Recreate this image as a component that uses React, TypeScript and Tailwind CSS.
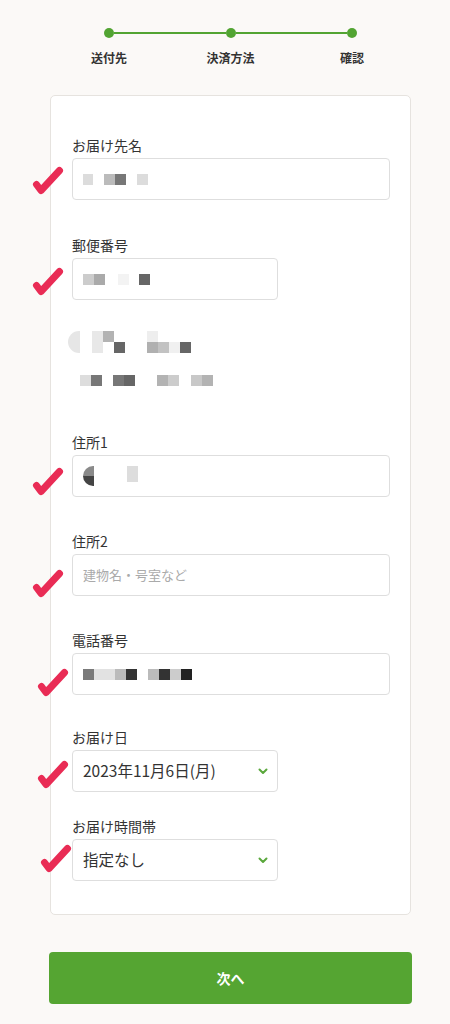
import type { ReactNode } from 'react';

const font = { fontFamily: '"Noto Sans CJK JP", "Noto Sans", sans-serif' };

type Cell = [number, string];

// Blurred/pixelated personal info, drawn as flat grey cells
function Mosaic({ cells, h = 11 }: { cells: Cell[]; h?: number }) {
  return (
    <div className="flex">
      {cells.map(([w, c], i) => (
        <div key={i} style={{ width: w, height: h, background: c }} />
      ))}
    </div>
  );
}

function Check({ className }: { className: string }) {
  return (
    <svg className={`absolute w-[32px] h-[30px] ${className}`} viewBox="0 0 32 30">
      <path d="M4.5 19.5L9 25.5L27.5 5.5" fill="none" stroke="#e92c55" strokeWidth="7" strokeLinecap="round" strokeLinejoin="round" />
    </svg>
  );
}

function Chevron() {
  return (
    <svg className="w-[10px] h-[7px]" viewBox="0 0 10 7">
      <polyline points="1.5,1.5 5,5 8.5,1.5" fill="none" stroke="#5aa83c" strokeWidth="2" strokeLinecap="round" strokeLinejoin="round" />
    </svg>
  );
}

function Field({
  label,
  narrow,
  check,
  className = '',
  children,
}: {
  label: string;
  narrow?: boolean;
  check: string;
  className?: string;
  children: ReactNode;
}) {
  return (
    <div className={className}>
      <div className="text-[14px] leading-[20px] text-[#333] mb-[3px]">{label}</div>
      <div
        className={`relative h-[42px] border border-[#dedede] rounded-[4px] bg-white flex items-center pl-[10px] pr-[9px] ${
          narrow ? 'w-[206px]' : 'w-[318px]'
        }`}
      >
        {children}
        <Check className={check} />
      </div>
    </div>
  );
}

export default function App() {
  return (
    <div className="w-[450px] min-h-[1024px] bg-[#fbf9f7] pt-[28px] pb-[20px]" style={font}>
      {/* stepper */}
      <div className="ml-[104px] w-[253px] flex items-center">
        <div className="w-[10px] h-[10px] rounded-full bg-[#52a432]" />
        <div className="flex-1 h-[2px] bg-[#52a432]" />
        <div className="w-[10px] h-[10px] rounded-full bg-[#52a432]" />
        <div className="flex-1 h-[2px] bg-[#52a432]" />
        <div className="w-[10px] h-[10px] rounded-full bg-[#52a432]" />
      </div>
      <div className="ml-[79px] w-[303px] mt-[11px] flex justify-between text-[12px] leading-[18px] font-bold text-[#333]">
        <div className="w-[60px] text-center">送付先</div>
        <div className="w-[60px] text-center">決済方法</div>
        <div className="w-[60px] text-center">確認</div>
      </div>

      {/* form card */}
      <div className="ml-[50px] w-[361px] mt-[28px] bg-white border border-[#e6e3df] rounded-[5px] pt-[39px] pb-[33px] pl-[21px] pr-[20px]">
        <Field label="お届け先名" check="left-[-41px] top-[6px]">
          <Mosaic cells={[[10, '#dcdcdc'], [11, 'transparent'], [11, '#bbb'], [11, '#777'], [11, 'transparent'], [11, '#dcdcdc']]} />
        </Field>

        <Field label="郵便番号" narrow className="mt-[35px]" check="left-[-41px] top-[7px]">
          <Mosaic cells={[[11, '#ccc'], [11, '#aaa'], [13, 'transparent'], [11, '#f3f3f3'], [10, 'transparent'], [11, '#666']]} />
        </Field>

        <div className="mt-[31px] flex flex-col">
          <div className="flex">
            <div className="w-[12px] h-[22px] rounded-l-full bg-[#e6e6e6] ml-[-4px]" />
            <div className="w-[12px]" />
            <div>
              <Mosaic cells={[[11, '#e8e8e8'], [11, '#b3b3b3']]} />
              <Mosaic cells={[[11, '#e8e8e8'], [11, 'transparent'], [11, '#666']]} />
            </div>
            <div className="w-[22px]" />
            <div>
              <Mosaic cells={[[11, '#eee']]} />
              <Mosaic cells={[[11, '#b0b0b0'], [11, '#c2c2c2'], [11, '#f0f0f0'], [11, '#666']]} />
            </div>
          </div>
          <div className="mt-[22px] ml-[8px]">
            <Mosaic cells={[[11, '#ddd'], [11, '#777'], [11, 'transparent'], [11, '#777'], [11, '#666'], [22, 'transparent'], [11, '#b3b3b3'], [11, '#ccc'], [12, 'transparent'], [11, '#c8c8c8'], [11, '#b3b3b3']]} />
          </div>
        </div>

        <Field label="住所1" className="mt-[46px]" check="left-[-41px] top-[10px]">
          <div className="flex items-start">
            <div className="w-[11px] h-[20px] rounded-l-full overflow-hidden flex flex-col">
              <div className="h-[10px] bg-[#8a8a8a]" />
              <div className="h-[10px] bg-[#444]" />
            </div>
            <div className="w-[33px]" />
            <div className="w-[11px] h-[16px] bg-[#ddd]" />
          </div>
        </Field>

        <Field label="住所2" className="mt-[34px]" check="left-[-41px] top-[13px]">
          <span className="text-[13px] text-[#aaa]">建物名・号室など</span>
        </Field>

        <Field label="電話番号" className="mt-[34px]" check="left-[-36px] top-[13px]">
          <Mosaic cells={[[11, '#7a7a7a'], [21, '#e2e2e2'], [11, '#bbb'], [11, '#333'], [11, 'transparent'], [11, '#bbb'], [11, '#333'], [11, '#ccc'], [11, '#222']]} />
        </Field>

        <Field label="お届け日" narrow className="mt-[32px]" check="left-[-36px] top-[8px]">
          <span className="flex-1 text-[15.5px] text-[#333]">2023年11月6日(月)</span>
          <Chevron />
        </Field>

        <Field label="お届け時間帯" narrow className="mt-[24px]" check="left-[-33px] top-[3px]">
          <span className="flex-1 text-[15.5px] text-[#333]">指定なし</span>
          <Chevron />
        </Field>
      </div>

      <button className="ml-[49px] mt-[37px] w-[363px] h-[52px] rounded-[4px] bg-[#55a532] text-white text-[14px] font-bold">
        次へ
      </button>
    </div>
  );
}
